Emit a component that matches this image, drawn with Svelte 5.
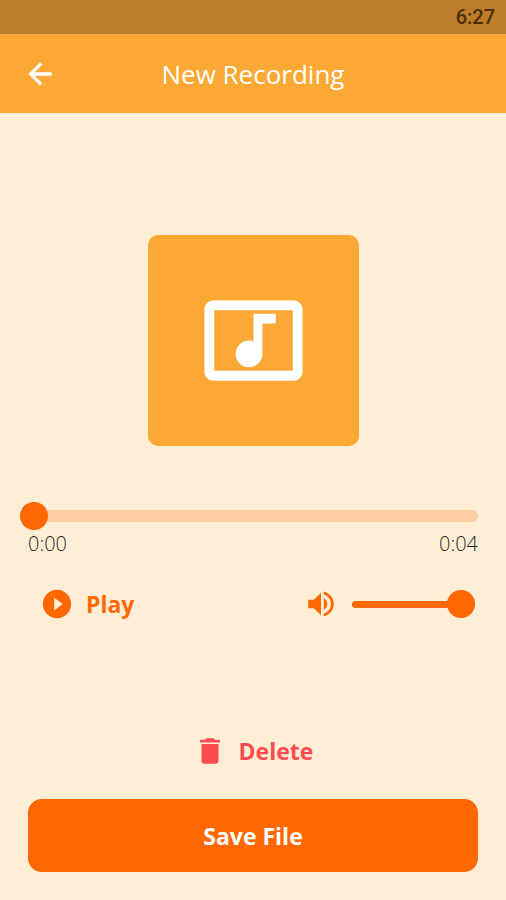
<script lang="ts">
  let position = $state(0);
  let volume = $state(100);
  let playing = $state(false);

  const duration = 4;

  function formatTime(seconds: number) {
    const rest = Math.floor(seconds % 60);
    return `${Math.floor(seconds / 60)}:${String(rest).padStart(2, "0")}`;
  }
</script>

<div class="screen">
  <div class="status">
    <time>6:27</time>
  </div>

  <header>
    <button class="back" type="button" aria-label="Back">
      <svg class="icon" viewBox="0 0 24 24">
        <path
          d="M20 11H7.83l5.59-5.59L12 4l-8 8 8 8 1.41-1.41L7.83 13H20z"
          stroke="currentColor"
          stroke-width="0.4"
        />
      </svg>
    </button>
    <h1>New Recording</h1>
  </header>

  <main>
    <div class="artwork">
      <svg viewBox="0 0 24 24">
        <path
          d="M21 3H3c-1.1 0-2 .9-2 2v14c0 1.1.9 2 2 2h18c1.1 0 2-.9 2-2V5c0-1.1-.9-2-2-2zm-.2 15.8H3.2V5.2h17.6zM8 15c0-1.66 1.34-3 3-3 .35 0 .69.07 1 .18V6h5v2.200h-3v6.830c-.02 1.64-1.35 2.97-3 2.97-1.66 0-3-1.34-3-3z"
        />
      </svg>
    </div>

    <input
      class="seek"
      type="range"
      aria-label="Position"
      min="0"
      max={duration}
      step="0.1"
      bind:value={position}
    />
    <div class="times">
      <span>{formatTime(position)}</span>
      <span>{formatTime(duration)}</span>
    </div>

    <div class="controls">
      <button class="text-button" type="button" onclick={() => (playing = !playing)}>
        <svg class="icon" viewBox="0 0 24 24">
          <path
            d="M12 2C6.48 2 2 6.48 2 12s4.48 10 10 10 10-4.48 10-10S17.52 2 12 2zm-2 14.5v-9l6 4.5z"
          />
        </svg>
        {playing ? "Pause" : "Play"}
      </button>

      <label class="volume">
        <svg class="icon" viewBox="0 0 24 24">
          <path
            d="M3 9v6h4l5 5V4L7 9H3zm13.5 3c0-1.77-1.02-3.29-2.5-4.03v8.05c1.48-.73 2.5-2.25 2.5-4.02zM14 3.23v2.06c2.89.86 5 3.54 5 6.71s-2.11 5.85-5 6.71v2.06c4.01-.91 7-4.49 7-8.77s-2.99-7.86-7-8.77z"
          />
        </svg>
        <input type="range" aria-label="Volume" min="0" max="100" bind:value={volume} />
      </label>
    </div>

    <div class="actions">
      <button class="text-button delete" type="button">
        <svg class="icon" viewBox="0 0 24 24">
          <path
            d="M6 19c0 1.1.9 2 2 2h8c1.1 0 2-.9 2-2V7H6v12zM19 4h-3.5l-1-1h-5l-1 1H5v2h14V4z"
          />
        </svg>
        Delete
      </button>
      <button class="save" type="button">Save File</button>
    </div>
  </main>
</div>

<style>
  :global(body) {
    margin: 0;
    background: #ffeed6;
  }

  .screen {
    display: flex;
    flex-direction: column;
    min-height: 100vh;
    background: #ffeed6;
    font-family: "Open Sans", "Noto Sans", sans-serif;
  }

  button {
    padding: 0;
    border: none;
    background: none;
    font: inherit;
    cursor: pointer;
  }

  .icon {
    display: block;
    width: 34px;
    height: 34px;
    fill: currentColor;
  }

  .status {
    display: flex;
    justify-content: flex-end;
    align-items: center;
    height: 34px;
    padding: 0 11px;
    background: #bd7d2a;
    color: #4b2f08;
    font: 500 20px/34px Roboto, sans-serif;
  }

  header {
    display: grid;
    grid-template-columns: 34px 1fr 34px;
    align-items: center;
    height: 79px;
    padding: 0 23px;
    background: #fba834;
    color: #fff;
  }

  h1 {
    margin: 0;
    font-size: 26px;
    line-height: 34px;
    font-weight: 400;
    text-align: center;
  }

  .back {
    color: inherit;
  }

  main {
    display: flex;
    flex: 1;
    flex-direction: column;
    padding: 122px 28px 28px;
  }

  .artwork {
    display: flex;
    justify-content: center;
    align-items: center;
    align-self: center;
    width: 211px;
    height: 211px;
    border-radius: 10px;
    background: #fba834;
  }

  .artwork svg {
    width: 107px;
    height: 107px;
    fill: #fff;
  }

  input[type="range"] {
    --track: 7px;
    --track-color: #ff6701;
    appearance: none;
    height: 28px;
    margin: 0;
    background: none;
    cursor: pointer;
  }

  input[type="range"]::-webkit-slider-runnable-track {
    height: var(--track);
    border-radius: 6px;
    background: var(--track-color);
  }

  input[type="range"]::-webkit-slider-thumb {
    appearance: none;
    width: 28px;
    height: 28px;
    margin-top: calc((var(--track) - 28px) / 2);
    border-radius: 50%;
    background: #ff6701;
  }

  /* the thumb hangs out over the left margin at 0:00 */
  input.seek {
    --track: 12px;
    --track-color: #fecda3;
    margin: 56px 0 0 -8px;
  }

  .times {
    display: flex;
    justify-content: space-between;
    color: #2e2820;
    font-size: 20px;
    line-height: 28px;
    font-weight: 300;
  }

  .controls {
    display: flex;
    justify-content: space-between;
    align-items: center;
    margin-top: 29px;
    padding: 0 3px 0 12px;
  }

  .text-button {
    display: flex;
    align-items: center;
    gap: 12px;
    color: #ff6701;
    font-size: 23px;
    line-height: 34px;
    font-weight: 700;
  }

  .volume {
    display: flex;
    align-items: center;
    gap: 14px;
    color: #ff6701;
  }

  .volume input {
    width: 123px;
  }

  .actions {
    display: flex;
    flex-direction: column;
    gap: 31px;
    margin-top: auto;
  }

  .delete {
    align-self: center;
    color: #fc4c50;
  }

  .save {
    height: 73px;
    border-radius: 14px;
    background: #ff6701;
    color: #fff;
    font-size: 23px;
    font-weight: 700;
  }
</style>
